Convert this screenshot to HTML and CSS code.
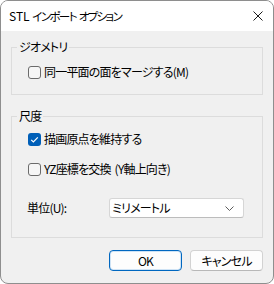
FILE: index.html
```html
<!doctype html>
<html lang="ja">
<head>
  <meta charset="utf-8">
  <title>STL インポート オプション</title>
  <link rel="stylesheet" href="styles.css">
</head>
<body>
  <div class="window">
    <div class="titlebar">
      <span class="title">STL <span class="kana">インポート</span> <span class="kana">オプション</span></span>
      <svg class="close" width="10" height="10" viewBox="0 0 10 10">
        <path d="M0.5 0.5 L9.5 9.5 M9.5 0.5 L0.5 9.5" stroke="#1a1a1a" stroke-width="1" fill="none"/>
      </svg>
    </div>

    <div class="content">
      <fieldset class="group group_geo">
        <legend>ジオメトリ</legend>
        <div class="check_row">
          <span class="box"></span>
          <span>同一平面の面をマージする(M)</span>
        </div>
      </fieldset>

      <fieldset class="group group_scale">
        <legend>尺度</legend>
        <div class="check_row">
          <span class="box checked">
            <svg width="13" height="13" viewBox="0 0 13 13">
              <path d="M3.2 6.8 L5.4 9 L9.8 4.4" stroke="#fff" stroke-width="1.2" fill="none"/>
            </svg>
          </span>
          <span>描画原点を維持する</span>
        </div>
        <div class="check_row second">
          <span class="box"></span>
          <span>YZ座標を交換 (Y軸上向き)</span>
        </div>
        <div class="unit_row">
          <span class="unit_label">単位(U):</span>
          <div class="select">
            <span>ミリメートル</span>
            <svg width="9" height="5" viewBox="0 0 9 5">
              <path d="M0.5 0.5 L4.5 4.5 L8.5 0.5" stroke="#5c5c5c" stroke-width="1" fill="none"/>
            </svg>
          </div>
        </div>
      </fieldset>

      <div class="buttons">
        <button class="btn default">OK</button>
        <button class="btn">キャンセル</button>
      </div>
    </div>
  </div>
</body>
</html>
```

FILE: styles.css
```css
* {
  margin: 0; padding: 0;
  box-sizing: border-box;
}
html, body {
  width: 100%;
  height: 100%;
  overflow: hidden;
  background: #fff;
}
body {
  font-family: "Noto Sans CJK JP", "Noto Sans", sans-serif;
  font-feature-settings: "palt";
  font-size: 12px;
  letter-spacing: -0.8px;
  word-spacing: 2px;
  color: #000;
}
.window {
  width: 274px;
  height: 284px;
  border: 1px solid #8e8e8e;
  border-radius: 8px;
  overflow: hidden;
  display: flex;
  flex-direction: column;
  background: #f0f0f0;
}
.titlebar {
  height: 30px;
  background: #fff;
  display: flex;
  align-items: center;
  justify-content: space-between;
  padding: 0 10px 0 8px;
}
.title {
  line-height: 16px;
  letter-spacing: 0;
  word-spacing: 0;
  white-space: pre;
}
.title .kana {
  font-size: 11.5px;
  letter-spacing: -1.6px;
}
.close {
  margin-top: -1px;
}
.content {
  flex: 1;
  padding: 8px 10px 0;
}
.group {
  border: 1px solid #dcdcdc;
  padding: 0 0 14px 5px;
}
.group legend {
  padding: 0 2px;
  line-height: 16px;
}
.group_geo {
  padding-top: 9px;
}
.group_scale {
  margin-top: 13px;
  padding-top: 7px;
  padding-bottom: 19px;
}
.check_row {
  display: flex;
  align-items: center;
  gap: 3px;
  height: 16px;
  margin-left: 11px;
  line-height: 16px;
}
.check_row.second {
  margin-top: 14px;
}
.box {
  width: 13px;
  height: 13px;
  border: 1px solid #6b6b6b;
  border-radius: 3px;
  background: #f6f6f6;
  flex: none;
}
.box.checked {
  border: none;
  background: #005fb8;
}
.box svg {
  display: block;
}
.unit_row {
  display: flex;
  align-items: center;
  margin-top: 21px;
  margin-left: 10px;
}
.unit_label {
  width: 82px;
  line-height: 16px;
}
.select {
  width: 135px;
  height: 20px;
  background: #fff;
  border: 1px solid #d6d6d6;
  border-bottom-color: #bcbcbc;
  border-radius: 3px;
  display: flex;
  align-items: center;
  justify-content: space-between;
  padding: 0 9px 0 2px;
  line-height: 16px;
}
.buttons {
  display: flex;
  justify-content: flex-end;
  gap: 8px;
  margin-top: 12px;
}
.btn {
  width: 73px;
  height: 21px;
  font: inherit;
  letter-spacing: inherit;
  color: #000;
  background: #fdfdfd;
  border: 1px solid #d2d2d2;
  border-bottom-color: #b8b8b8;
  border-radius: 4px;
  line-height: 16px;
}
.btn.default {
  border: 1px solid #0067c0;
  box-shadow: inset 0 0 0 1px #cfe3f5;
}
```
